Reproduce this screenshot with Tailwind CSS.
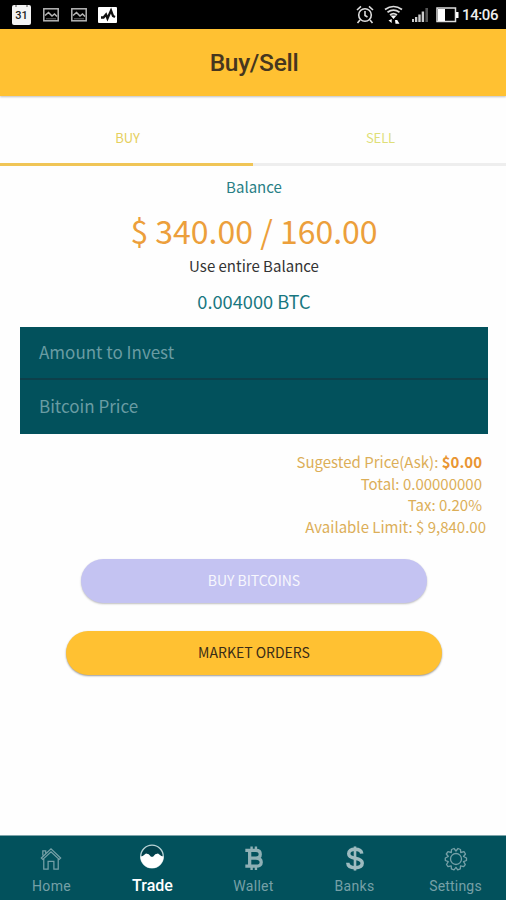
<!DOCTYPE html>
<html lang="en">
<head>
<meta charset="utf-8">
<meta name="viewport" content="width=device-width, initial-scale=1">
<title>Buy/Sell</title>
<script src="https://cdn.jsdelivr.net/npm/@tailwindcss/browser@4"></script>
</head>
<body class="h-[900px] w-[506px] overflow-hidden bg-[#fefefe] font-['Noto_Sans_CJK_SC',sans-serif]">
<div class="flex h-full flex-col">
  <div class="flex h-[29px] shrink-0 items-center justify-between bg-black pl-[12px] pr-[8px] font-[Roboto,sans-serif]">
    <div class="flex items-center">
      <div class="relative h-[20px] w-[19px] rounded-[2px] bg-[#f4f4f4] text-center text-[11px] leading-[22px] font-medium text-[#222]">31
        <svg class="absolute left-0 top-0" width="19" height="5"><path d="M4 0v2M15 0v2" stroke="#777" stroke-width="1.3"/></svg>
      </div>
      <svg class="ml-[12px]" width="16" height="14" viewBox="0 0 16 14" fill="none" stroke="#b5b5b5" stroke-width="1.500"><rect x=".8" y=".8" width="14.400" height="12"/><path d="M2 7.500l3.500-3 3.500 3.500 2.500-2L14 8.500" stroke-width="1.600"/><path d="M3 10.800h10" stroke="#666" stroke-width="1"/></svg>
      <svg class="ml-[12px]" width="16" height="14" viewBox="0 0 16 14" fill="none" stroke="#b5b5b5" stroke-width="1.500"><rect x=".8" y=".8" width="14.400" height="12"/><path d="M2 7.500l3.500-3 3.500 3.500 2.500-2L14 8.500" stroke-width="1.600"/><path d="M3 10.800h10" stroke="#666" stroke-width="1"/></svg>
      <svg class="ml-[11px]" width="19" height="16" viewBox="0 0 19 16"><rect width="19" height="16" rx="1" fill="#fff"/><path d="M3 10.500h2.500L8 7.500l1.500 4L13 3.500l2 5.500 2 1" fill="none" stroke="#111" stroke-width="2.300"/></svg>
    </div>
    <div class="flex items-center">
      <svg width="18" height="19" viewBox="0 0 18 19" fill="none" stroke="#ddd" stroke-width="1.6"><circle cx="9" cy="10" r="6.300"/><path d="M9 6v4.500l2.500 1.500M1 5l4-3.700M17 5l-4-3.700M4 15l-2.500 3M14 15l2.500 3"/></svg>
      <svg class="ml-[10px]" width="19" height="20" viewBox="0 0 19 20" fill="none" stroke="#ddd" stroke-width="1.700"><path d="M1 4.500q8.500-6 17 0M3.500 7.300q6-4.500 12 0M6 10q3.500-2.700 7 0"/><path d="M6.500 10.500h6l-3 3.500zM4.500 15.500l3.200-1.500v4zM11 15h2.200l2.300 3.700h-4z" fill="#fff" stroke="none"/></svg>
      <svg class="ml-[8px]" width="18" height="15" viewBox="0 0 18 15"><path d="M1 12h2v3H1zM4 10h2.300v5H4zM7.300 7.500h2.400V15H7.300zM10.700 4.500h2.400V15h-2.400z" fill="#ccc"/><path d="M14.400 1H17v14h-2.600z" fill="#555"/></svg>
      <svg class="ml-[7px]" width="23" height="16" viewBox="0 0 23 16"><rect x="1" y="1" width="18.500" height="13.500" fill="none" stroke="#ddd" stroke-width="1.500"/><path d="M2 2h7v12H2zM20 5h2.500v6H20z" fill="#fff"/></svg>
      <span class="ml-[3px] w-[36px] pt-[1px] text-[15px] font-medium tracking-[-0.400px] whitespace-nowrap text-[#eee]">14:06</span>
    </div>
  </div>
  <header class="flex h-[67px] shrink-0 items-center justify-center bg-[#ffc132] pt-[1px] pl-[2px] font-[Roboto,sans-serif] text-[24.500px] text-[#46361f] shadow-[0_1px_2px_rgba(0,0,0,0.25)]"><h1 class="font-medium tracking-[-0.300px]">Buy/Sell</h1></header>
  <div class="mt-[17px] grid h-[53px] shrink-0 grid-cols-2 text-center text-[13px]">
    <div class="border-b-[3px] border-[#f0c556] pl-[2px] leading-[49px] text-[#e6d05e]">BUY</div>
    <div class="border-b-[3px] border-[#eeeeee] pl-[2px] leading-[49px] tracking-[-0.100px] text-[#dfdf78]">SELL</div>
  </div>
  <main class="flex flex-col pl-[20px] pr-[18px] text-center">
    <div class="mt-[9px] h-[24px] text-[15px] leading-[24px] text-[#287f85]">Balance</div>
    <div class="mt-[9px] h-[44px] text-[32px] leading-[44px] text-[#ec9f3b]">$ 340.00 / 160.00</div>
    <div class="mt-[2px] h-[24px] text-[15px] leading-[24px] text-[#333]">Use entire Balance</div>
    <div class="mt-[10px] h-[26px] text-[18.200px] leading-[26px] text-[#187780]">0.004000 BTC</div>
    <div class="mt-[13px] bg-[#02515c] text-left text-[17px] text-[#699ca3]">
      <div class="h-[53px] border-b-2 border-[#0d3f4a] pl-[19px] leading-[50px]">Amount to Invest</div>
      <div class="h-[54px] pl-[19px] leading-[52px]">Bitcoin Price</div>
    </div>
    <div class="mt-[17px] flex h-[87px] flex-col items-end pr-[6px] text-[15px] leading-[21.600px] text-[#dcae58]">
      <div>Sugested Price(Ask): <b class="text-[#e99532]">$0.00</b></div>
      <div>Total: 0.00000000</div>
      <div>Tax: 0.20%</div>
      <div class="mr-[-4px]">Available Limit: $ 9,840.00</div>
    </div>
    <button class="mt-[21px] ml-[61px] h-[44px] w-[346px] rounded-full bg-[#c4c3f2] pb-[2px] text-[14px] text-[#f7f7fd] shadow-[0_1px_2px_rgba(0,0,0,0.25)]">BUY BITCOINS</button>
    <button class="mt-[28px] ml-[46px] h-[44px] w-[376px] rounded-full bg-[#ffc132] pb-[2px] text-[14px] text-[#3a2c17] shadow-[0_1px_2px_rgba(0,0,0,0.4)]">MARKET ORDERS</button>
  </main>
  <nav class="mt-auto grid h-[65px] shrink-0 grid-cols-5 border-t border-[#7da4aa] bg-[#02515c] pl-[1px] text-center font-[Roboto,sans-serif] text-[14px] text-[#76a0a7]">
    <div class="flex flex-col items-center pt-[9px]"><svg class="-ml-[2px]" width="24" height="27" viewBox="0 0 24 28" fill="none" stroke="#76a0a7" stroke-width="1.300"><path d="M2 13.500L12 4l10 9.500-1.500 1.500L12 7l-8.500 8zM4.500 14v11H9v-8h6v8h4.500V14M3.500 11V6h3v2.500"/></svg><span class="mt-[5px] leading-[18px] tracking-[0.300px]">Home</span></div>
    <div class="flex flex-col items-center pt-[6px] font-medium text-white"><svg class="-ml-[1px]" width="26" height="28" viewBox="0 0 26 28"><circle cx="13" cy="14.500" r="11.300" fill="#02424d" stroke="#b8d3d6" stroke-width="1.300"/><path d="M1.500 14.500q3-.5 5.500-3 3 0 5 3.200h2q2-3.200 5-3.200 2.500 2.500 5.500 3a11.500 11.500 0 0 1-23 0z" fill="#fff"/></svg><span class="mt-[6px] text-[16px] leading-[19px]">Trade</span></div>
    <div class="flex flex-col items-center pt-[9px]"><svg width="22" height="27" viewBox="0 0 22 28" fill="none" stroke="#8fb0b5"><path d="M2 5.500h11q4.500 0 4.500 4T13 13.500H7M13 13.500q5.500 0 5.500 4.300T13 22H2M6.500 5.500V22" stroke-width="3.400"/><path d="M8.500 1.500V6M13 1.500V6M8.500 21v5M13 21v5" stroke-width="2.500"/></svg><span class="mt-[5px] leading-[18px] tracking-[0.300px]">Wallet</span></div>
    <div class="flex flex-col items-center pt-[9px]"><svg width="22" height="27" viewBox="0 0 22 28" fill="none" stroke="#9dbbc0"><path d="M18 9q-.5-4.500-7-4.500-6.500 0-6.500 4.500 0 3.500 6.500 4.700 7.500 1.300 7.500 5 0 4.800-7.500 4.800T3.500 18.500" stroke-width="3.600"/><path d="M11 1.500v25" stroke-width="2.700"/></svg><span class="mt-[5px] leading-[18px] tracking-[0.300px]">Banks</span></div>
    <div class="flex flex-col items-center pt-[9px]"><svg width="24" height="28" viewBox="0 0 24 28" fill="none" stroke="#76a0a7" stroke-width="1.300" stroke-linejoin="round"><circle cx="12" cy="14" r="5.500"/><path d="M10 3.500l2 2.500 2-2.500 2.500 1 .2 3 3.300-.8 1.500 2.300-2 2.500 3 1.500v2.500l-3 1.200 1.800 2.800-1.600 2.200-3.200-.8-.2 3-2.600 1-1.700-2.500-2 2.500-2.600-1-.2-3-3.200.8-1.500-2.200 1.800-2.800-3-1.200V13l3-1.500-2-2.500L4 6.700l3.300.8.200-3z"/></svg><span class="mt-[4px] leading-[18px] tracking-[0.200px]">Settings</span></div>
  </nav>
</div>
</body>
</html>
